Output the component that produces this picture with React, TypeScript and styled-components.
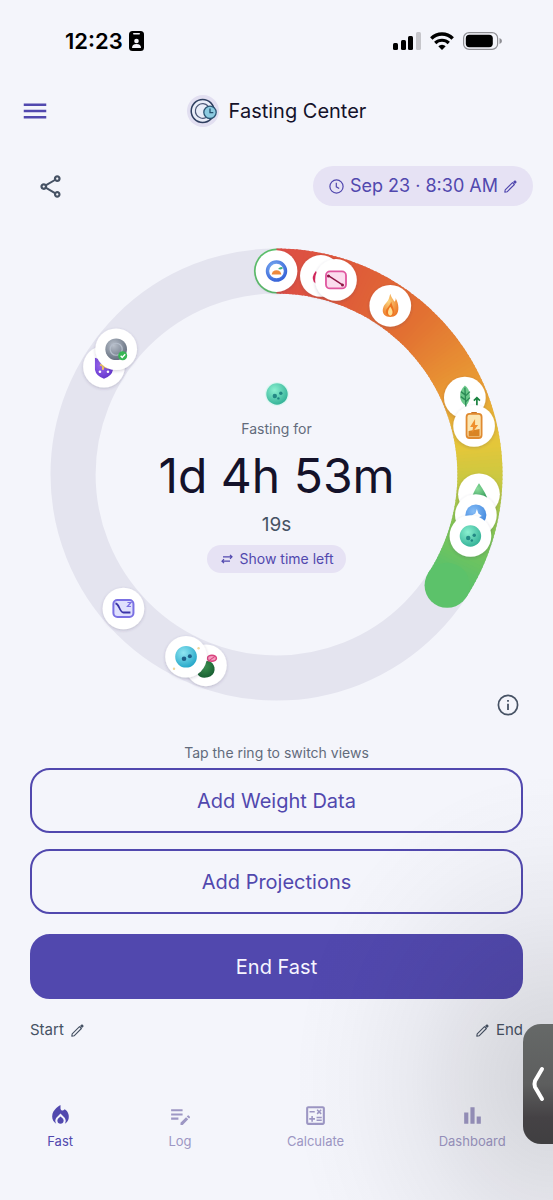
import React from "react";
import styled, { createGlobalStyle, css } from "styled-components";
import {
  MdBarChart,
  MdEditNote,
  MdLocalFireDepartment,
  MdMenu,
  MdOutlineCalculate,
  MdOutlineShare,
} from "react-icons/md";

const color = {
  page: "#f4f5fb",
  primary: "#5148ae",
  tint: "#e6e2f4",
  track: "#e4e4ef",
  ink: "#14122a",
  slate: "#465264",
  grey: "#626b7b",
  muted: "#9d97c4",
};

const GlobalStyle = createGlobalStyle`
  * { box-sizing: border-box; }
  body {
    margin: 0;
    background: ${color.page};
    font-family: Inter, "Liberation Sans", sans-serif;
    color: ${color.ink};
  }
  button {
    font: inherit;
    color: inherit;
    background: none;
    border: 0;
    padding: 0;
    cursor: pointer;
  }
  svg { display: block; flex-shrink: 0; }
`;

const Screen = styled.div`
  min-height: 100vh;
  display: flex;
  flex-direction: column;
  overflow: hidden;
`;

const StatusBar = styled.div`
  height: 82px;
  padding: 0 51px 0 65px;
  display: flex;
  align-items: center;
  justify-content: space-between;
  color: #000;
`;

const StatusGroup = styled.div<{ $gap: number }>`
  display: flex;
  align-items: center;
  gap: ${(p) => p.$gap}px;
`;

const StatusTime = styled.span`
  font-size: 22px;
  line-height: 26px;
  font-weight: 600;
`;

const Header = styled.header`
  height: 58px;
  padding: 0 20px;
  display: grid;
  grid-template-columns: 1fr auto 1fr;
  align-items: center;
`;

const IconButton = styled.button<{ $tone: string }>`
  display: flex;
  justify-self: start;
  color: ${(p) => p.$tone};
`;

const Brand = styled.div`
  display: flex;
  align-items: center;
  gap: 10px;
`;

const Title = styled.h1`
  margin: 0;
  font-size: 20px;
  line-height: 28px;
  font-weight: 400;
`;

const Toolbar = styled.div`
  padding: 26px 20px 0 37px;
  display: flex;
  align-items: center;
  justify-content: space-between;
`;

const Chip = styled.button<{ $size: "large" | "small" }>`
  && {
    display: flex;
    align-items: center;
    color: ${color.primary};
    background: ${color.tint};
    border-radius: 20px;
    ${(p) =>
      p.$size === "large"
        ? css`
            height: 40px;
            padding: 0 16px;
            gap: 6px;
            font-size: 18px;
            line-height: 24px;
          `
        : css`
            height: 28px;
            padding: 0 13px;
            gap: 6px;
            font-size: 14px;
            line-height: 18px;
          `}
  }
`;

const RingSection = styled.section`
  margin-top: 42px;
  display: grid;
`;

const RingBox = styled.div`
  grid-area: 1 / 1;
  width: calc(100% - 100px);
  max-width: 520px;
  margin: 0 auto 17px;
  display: grid;
`;

const RingSvg = styled.svg`
  grid-area: 1 / 1;
  width: 100%;
  height: auto;
  overflow: visible;
`;

const Readout = styled.div`
  grid-area: 1 / 1;
  place-self: center;
  padding-top: 6px;
  display: flex;
  flex-direction: column;
  align-items: center;
`;

const ReadoutLabel = styled.span`
  margin-top: 14px;
  font-size: 14px;
  line-height: 18px;
  color: ${color.grey};
`;

const Elapsed = styled.strong`
  margin-top: 8px;
  font-size: 48px;
  line-height: 60px;
  font-weight: 400;
  white-space: nowrap;
`;

const Seconds = styled.span`
  margin: 8px 0 9px;
  font-size: 19px;
  line-height: 22px;
  color: ${color.slate};
`;

const InfoButton = styled.button`
  && {
    grid-area: 1 / 1;
    place-self: end;
    margin-right: 34px;
    margin-bottom: 2px;
    color: ${color.slate};
  }
`;

const Hint = styled.p`
  margin: 26px 0 6px;
  text-align: center;
  font-size: 14px;
  line-height: 18px;
  color: ${color.grey};
`;

const Actions = styled.div`
  padding: 0 30px;
  display: flex;
  flex-direction: column;
  gap: 16px;
`;

const ActionButton = styled.button<{ $filled?: boolean }>`
  && {
    height: 65px;
    border: 2px solid ${color.primary};
    border-radius: 20px;
    font-size: 20px;
    line-height: 28px;
    color: ${(p) => (p.$filled ? "#f6f5ff" : color.primary)};
    background: ${(p) => (p.$filled ? color.primary : "transparent")};
    margin-top: ${(p) => (p.$filled ? 4 : 0)}px;
  }
`;

const RangeRow = styled.div`
  padding: 21px 30px 0;
  display: flex;
  justify-content: space-between;
`;

const RangeButton = styled.button`
  && {
    display: flex;
    align-items: center;
    gap: 7px;
    font-size: 15px;
    line-height: 20px;
    color: ${color.slate};
  }
`;

const Nav = styled.nav`
  padding: 63px 0 48px;
  display: flex;
  justify-content: space-around;
`;

const NavLink = styled.a<{ $active?: boolean }>`
  display: flex;
  flex-direction: column;
  align-items: center;
  gap: 4px;
  font-size: 13px;
  line-height: 18px;
  text-decoration: none;
  color: ${(p) => (p.$active ? color.primary : color.muted)};
`;

const EdgeShade = styled.div`
  position: fixed;
  right: 0;
  bottom: 0;
  width: 280px;
  height: 440px;
  pointer-events: none;
  background: radial-gradient(
    ellipse 260px 310px at 100% 73%,
    rgba(40, 40, 45, 0.16),
    rgba(40, 40, 45, 0.11) 28%,
    rgba(40, 40, 45, 0.05) 55%,
    rgba(40, 40, 45, 0.015) 80%,
    rgba(40, 40, 45, 0) 100%
  );
`;

const EdgeHandle = styled.button`
  && {
    position: fixed;
    right: 0;
    bottom: 56px;
    width: 30px;
    height: 120px;
    display: flex;
    align-items: center;
    justify-content: center;
    border-radius: 18px 0 0 18px;
    background: linear-gradient(#666968, #5d5e5e 50%, #454245 78%, #403f41);
  }
`;

const CENTER = 226;
const RADIUS = 203;
const SWEEP = 123;

function pointAt(angle: number) {
  const rad = ((angle - 90) * Math.PI) / 180;
  return { x: CENTER + RADIUS * Math.cos(rad), y: CENTER + RADIUS * Math.sin(rad) };
}

const stops: [number, number[]][] = [
  [0, [221, 78, 70]],
  [18, [222, 88, 58]],
  [42, [226, 112, 50]],
  [66, [233, 156, 52]],
  [82, [228, 199, 58]],
  [92, [200, 200, 66]],
  [106, [128, 196, 84]],
  [118, [96, 194, 104]],
  [124, [92, 194, 106]],
];

function ringColor(angle: number) {
  const i = Math.max(1, stops.findIndex(([a]) => a >= angle));
  const [a0, c0] = stops[i - 1];
  const [a1, c1] = stops[i];
  const t = (angle - a0) / (a1 - a0);
  return `rgb(${c0.map((c, k) => Math.round(c + (c1[k] - c) * t)).join(",")})`;
}

function arc(from: number, to: number) {
  const a = pointAt(from);
  const b = pointAt(to);
  return `M${a.x} ${a.y}A${RADIUS} ${RADIUS} 0 0 1 ${b.x} ${b.y}`;
}

const Ball = ({ fill }: { fill: string }) => (
  <g>
    <circle r="10.7" fill={`url(#${fill})`} />
    <g fill="#0d6f74" opacity="0.75">
      <circle cx="-2.2" cy="2" r="2.2" />
      <circle cx="3.8" cy="-0.8" r="1.7" />
      <circle cx="1.4" cy="4.4" r="1.2" />
    </g>
  </g>
);

const Sunrise = () => (
  <g>
    <circle r="9" fill="#fff" stroke="url(#blueRing)" strokeWidth="3.4" />
    <path d="M-4.800 3.500A4.800 4.300 0 0 1 4.800 3.500Z" fill="#ee8a3c" />
    <path d="M1.500-2q3-3.500 5-1q-1 2-5 1z" fill="#3fb183" />
  </g>
);

const Drop = () => <path d="M-5-5q-5 6-2 11q4 4 10 1z" fill="#d6285b" />;

const ChartDown = () => (
  <g>
    <rect x="-10" y="-8.500" width="20" height="17" rx="4" fill="#fbdcee" stroke="#e0569f" strokeWidth="1.800" />
    <path d="M-8-4.500 6.500 5" stroke="#8d1544" strokeWidth="1.400" />
    <circle cx="-7.500" cy="-4" r="1.500" fill="#8d1544" />
    <circle cx="6.500" cy="5" r="1.500" fill="#8d1544" />
  </g>
);

const Flame = () => (
  <g>
    <path d="M0-12C1-8 3-7 4-4C5-5 6-6 5-8C9-2 9 6 6 9C3 12-3 12-6 9C-9 5-7 0-4-3C-1-6-1-9 0-12Z" fill="url(#flame)" />
    <path d="M1-4C2 1 5 4 3 9C1 11-2 11-4 8C-6 3-1 2 1-4Z" fill="#ee7420" />
    <path d="M0 1C3 5 3 9 0 10C-3 9-3 5 0 1Z" fill="#ffe092" />
  </g>
);

const Leaf = () => (
  <g>
    <path d="M0-12C6-8 7 3 1 8C-6 5-7-6 0-12Z" fill="#6cc98b" />
    <path d="M0-10 1 9M0-3-4-6M0 2-4-1M1-2 5-6M1 4 5 0" stroke="#2a8a55" strokeWidth="1.300" fill="none" />
    <path d="M12 8V0M9 3l3-3 3 3" stroke="#19823f" strokeWidth="1.700" fill="none" />
  </g>
);

const Battery = () => (
  <g>
    <rect x="-3" y="-14" width="6" height="4" rx="1" fill="#c87424" />
    <rect x="-7.500" y="-12" width="15" height="24" rx="3" fill="#fbe6b2" stroke="#e08a30" strokeWidth="1.800" />
    <path d="M-5.500 5 5.500 3V10.500H-5.500Z" fill="#d98424" />
    <path d="M1-7-4 1H-1L-2 7 4-1H1Z" fill="#ef8f2d" />
  </g>
);

const Mountain = () => <path d="M0-11Q7-1 9 6H-8Q-6-2 0-11Z" fill="url(#green)" />;

const BlueSpark = () => (
  <g>
    <circle r="10.500" fill="url(#sky)" />
    <path d="M1-6 2.500-1.500 6 1 2.500 2.500 1 6-0.500 2.500-5 1-0.500-1.500Z" fill="#fff" />
  </g>
);

const Avocado = () => (
  <g>
    <path d="M-8 9C-9 2-2-7 4-4C11 0 10 10 2 12C-3 13-7 12-8 9Z" fill="url(#darkGreen)" />
    <ellipse cx="6" cy="-7" rx="4.500" ry="3" fill="#f59cc0" stroke="#d9457f" strokeWidth="1.500" />
    <path d="M2-4 9-9" stroke="#d9457f" />
  </g>
);

const BlueBall = () => (
  <g>
    <circle r="10.800" fill="url(#cyan)" />
    <circle cx="-2" cy="2" r="2.300" fill="#1d5f88" />
    <circle cx="3.800" cy="-0.500" r="2" fill="#1d5f88" />
    <circle cx="12.500" cy="-8.500" r="1.200" fill="#f0d69a" />
    <circle cx="-12" cy="12" r="1.200" fill="#f0d69a" />
  </g>
);

const SleepChart = () => (
  <g fill="none">
    <rect x="-10" y="-8.500" width="20" height="17" rx="4" fill="#dfe0fd" stroke="#7a70e3" strokeWidth="2" />
    <path d="M-8-5C-4-5-4 4 0 4H7" stroke="#3b35a8" strokeWidth="1.800" />
    <path d="M4-6H7.500L4-2H7.500" stroke="#7a70e3" strokeWidth="1.200" />
  </g>
);

const Shield = () => (
  <g>
    <path d="M-9-9Q0-5 9-9V3Q8 9 0 12Q-8 9-9 3Z" fill="url(#violet)" />
    <path d="M-1-4V3M-4-2 4 1" stroke="#f2c75c" strokeWidth="2" />
    <circle cx="-4" cy="5" r="1.300" fill="#fff" />
    <circle cx="4" cy="5" r="1.300" fill="#fff" />
  </g>
);

const Medal = () => (
  <g>
    <circle r="10.800" fill="url(#steel)" />
    <circle r="6" fill="none" stroke="#b4bdca" strokeWidth="1.200" />
    <circle cx="6.500" cy="6.500" r="4.500" fill="#37b654" />
    <path d="m4.500 6.500 1.500 1.600 3-3.200" stroke="#fff" strokeWidth="1.400" fill="none" />
  </g>
);

const milestones: { angle: number; name: string; icon: React.ReactNode }[] = [
  { angle: 0, name: "sunrise", icon: <Sunrise /> },
  { angle: 12.6, name: "drop", icon: <Drop /> },
  { angle: 17, name: "decline", icon: <ChartDown /> },
  { angle: 34, name: "flame", icon: <Flame /> },
  { angle: 67.8, name: "leaf", icon: <Leaf /> },
  { angle: 76.2, name: "battery", icon: <Battery /> },
  { angle: 95.6, name: "mountain", icon: <Mountain /> },
  { angle: 101.5, name: "spark", icon: <BlueSpark /> },
  { angle: 107.6, name: "cell", icon: <Ball fill="mint" /> },
  { angle: 200.3, name: "avocado", icon: <Avocado /> },
  { angle: 206.4, name: "renewal", icon: <BlueBall /> },
  { angle: 228.8, name: "sleep", icon: <SleepChart /> },
  { angle: 302, name: "shield", icon: <Shield /> },
  { angle: 308, name: "medal", icon: <Medal /> },
];

const gradients: [string, string, string][] = [
  ["mint", "#8af0d0", "#2fae94"],
  ["cyan", "#8fe6f2", "#1fa3c6"],
  ["steel", "#b9c0cb", "#5d6878"],
  ["blueRing", "#86b8f5", "#3864d8"],
  ["sky", "#86bdf6", "#3f86dd"],
  ["green", "#8bdc9b", "#2f9a56"],
  ["darkGreen", "#3d9650", "#155a30"],
  ["violet", "#a06cf2", "#5f32c9"],
  ["flame", "#fbd27c", "#ec7423"],
];

function Ring() {
  const start = pointAt(0);
  const end = pointAt(SWEEP);
  return (
    <RingSvg viewBox="0 0 452 452" role="img" aria-label="Fasting progress ring">
      <defs>
        {gradients.map(([id, from, to]) => (
          <radialGradient key={id} id={id} cx="0.38" cy="0.32" r="0.75">
            <stop offset="0" stopColor={from} />
            <stop offset="1" stopColor={to} />
          </radialGradient>
        ))}
        <filter id="lift" x="-30%" y="-30%" width="160%" height="160%">
          <feDropShadow dx="0" dy="1" stdDeviation="1.800" floodColor="#3b3560" floodOpacity="0.24" />
        </filter>
      </defs>
      <circle cx={CENTER} cy={CENTER} r={RADIUS} fill="none" stroke={color.track} strokeWidth="45" />
      <circle cx={start.x} cy={start.y} r="22.500" fill="#5cc26a" />
      {Array.from({ length: SWEEP }, (_, i) => (
        <path
          key={i}
          d={arc(i, Math.min(i + 1.4, SWEEP))}
          stroke={ringColor(i + 0.5)}
          strokeWidth="45"
          fill="none"
        />
      ))}
      <circle cx={end.x} cy={end.y} r="22.500" fill="#5cc26a" />
      {milestones.map(({ angle, name, icon }) => {
        const p = pointAt(angle);
        return (
          <g key={name} transform={`translate(${p.x} ${p.y})`}>
            <circle r="20.800" fill="#fff" filter="url(#lift)" />
            {icon}
          </g>
        );
      })}
    </RingSvg>
  );
}

const BadgeIcon = () => (
  <svg width="15" height="20" viewBox="0 0 15 20" aria-hidden="true">
    <rect width="15" height="20" rx="3.500" fill="#000" />
    <rect x="4" y="2" width="7" height="1.600" rx="0.800" fill={color.page} />
    <circle cx="7.500" cy="10" r="2.300" fill={color.page} />
    <path d="M3 17Q3 13 7.500 13Q12 13 12 17Z" fill={color.page} />
  </svg>
);

const SignalIcon = () => (
  <svg width="28" height="18" viewBox="0 0 28 18" aria-hidden="true">
    <rect y="11" width="5" height="7" rx="1.500" />
    <rect x="8" y="8" width="5" height="10" rx="1.500" />
    <rect x="15" y="4" width="5" height="14" rx="1.500" />
    <rect x="23" y="0" width="5" height="18" rx="1.500" fill="#c6c6cb" />
  </svg>
);

const WifiIcon = () => (
  <svg width="24" height="18" viewBox="0 0 24 18" fill="none" stroke="#000" strokeWidth="3.500" aria-hidden="true">
    <path d="M1.300 6.400A15.500 15.500 0 0 1 22.700 6.400" />
    <path d="M5.200 11A9.800 9.800 0 0 1 18.800 11" strokeWidth="3.200" />
    <path d="M12 18 8.300 14.300A5.300 5.300 0 0 1 15.700 14.300Z" fill="#000" stroke="none" />
  </svg>
);

const BatteryIcon = () => (
  <svg width="39" height="18" viewBox="0 0 39 18" aria-hidden="true">
    <rect x="0.600" y="0.600" width="34" height="16.800" rx="5.500" fill="none" stroke="#8e8e93" strokeWidth="1.200" />
    <rect x="2.800" y="2.800" width="27" height="12.400" rx="3.600" />
    <path d="M36.500 6V12Q39 11 39 9T36.500 6Z" fill="#8e8e93" />
  </svg>
);

const Logo = () => (
  <svg width="32" height="32" viewBox="0 0 32 32" fill="none" aria-hidden="true">
    <circle cx="16" cy="16" r="16" fill="#e2dff1" />
    <circle cx="15.700" cy="16" r="11.500" fill="#e9edf8" stroke="#2f3f60" strokeWidth="1.500" />
    <path d="M21 11A7.300 7.300 0 1 0 19 22.500" stroke="#4d5878" strokeWidth="1.200" />
    <circle cx="23" cy="17.300" r="6.200" fill="#8ccbe0" stroke="#2b5573" strokeWidth="1.300" />
    <path d="M23 13.500V17.700H26.300" stroke="#24506e" strokeWidth="1.300" />
  </svg>
);

const SwapIcon = () => (
  <svg width="14" height="14" viewBox="0 0 14 14" aria-hidden="true">
    <g fill="none" stroke="currentColor" strokeWidth="1.200">
      <path d="M3 4.800H11.500M10 2.800 12 4.800 10 6.800" />
      <path d="M10 9.200H2M4 7.200 2 9.200 4 11.200" />
    </g>
  </svg>
);

const ClockIcon = () => (
  <svg width="15" height="15" viewBox="0 0 15 15" fill="none" stroke="currentColor" strokeWidth="1.200" aria-hidden="true">
    <circle cx="7.500" cy="7.500" r="6.600" />
    <path d="M7.300 3.800V7.800L10.200 9.600" />
  </svg>
);

const PencilIcon = () => (
  <svg width="13" height="13" viewBox="0 0 13 13" aria-hidden="true">
    <path
      d="M0.800 12.200 1.200 9.900 8.500 2.600 10.400 4.500 3.100 11.800Z"
      fill="none"
      stroke="currentColor"
      strokeWidth="1.100"
      strokeLinejoin="round"
    />
    <path d="M9 2 10.500 0.600Q11 0.200 11.500 0.600L12.400 1.500Q12.800 2 12.400 2.500L11 4Z" fill="currentColor" />
  </svg>
);

const InfoIcon = () => (
  <svg width="22" height="22" viewBox="0 0 22 22" aria-hidden="true">
    <circle cx="11" cy="11" r="9.600" fill="none" stroke="currentColor" strokeWidth="1.700" />
    <path d="M10.100 9.700H11.900V16H10.100ZM10.100 6H11.900V7.800H10.100Z" fill="currentColor" />
  </svg>
);

const tabs = [
  { label: "Fast", Icon: MdLocalFireDepartment },
  { label: "Log", Icon: MdEditNote },
  { label: "Calculate", Icon: MdOutlineCalculate },
  { label: "Dashboard", Icon: MdBarChart },
];

export default function App() {
  return (
    <Screen>
      <GlobalStyle />
      <StatusBar>
        <StatusGroup $gap={6}>
          <StatusTime>12:23</StatusTime>
          <BadgeIcon />
        </StatusGroup>
        <StatusGroup $gap={9}>
          <SignalIcon />
          <WifiIcon />
          <BatteryIcon />
        </StatusGroup>
      </StatusBar>

      <Header>
        <IconButton $tone={color.primary} aria-label="Menu">
          <MdMenu size={30} />
        </IconButton>
        <Brand>
          <Logo />
          <Title>Fasting Center</Title>
        </Brand>
      </Header>

      <main>
        <Toolbar>
          <IconButton $tone={color.slate} aria-label="Share">
            <MdOutlineShare size={27} />
          </IconButton>
          <Chip $size="large">
            <ClockIcon />
            Sep 23 · 8:30 AM
            <PencilIcon />
          </Chip>
        </Toolbar>

        <RingSection>
          <RingBox>
            <Ring />
            <Readout>
              <svg width="24" height="24" viewBox="-12 -12 24 24" aria-hidden="true">
                <circle r="12" fill="#dff6f2" />
                <Ball fill="mint" />
              </svg>
              <ReadoutLabel>Fasting for</ReadoutLabel>
              <Elapsed>1d 4h 53m</Elapsed>
              <Seconds>19s</Seconds>
              <Chip $size="small">
                <SwapIcon />
                Show time left
              </Chip>
            </Readout>
          </RingBox>
          <InfoButton aria-label="Info">
            <InfoIcon />
          </InfoButton>
        </RingSection>

        <Hint>Tap the ring to switch views</Hint>

        <Actions>
          <ActionButton>Add Weight Data</ActionButton>
          <ActionButton>Add Projections</ActionButton>
          <ActionButton $filled>End Fast</ActionButton>
        </Actions>

        <RangeRow>
          <RangeButton>
            Start
            <PencilIcon />
          </RangeButton>
          <RangeButton>
            <PencilIcon />
            End
          </RangeButton>
        </RangeRow>
      </main>

      <Nav>
        {tabs.map(({ label, Icon }, i) => (
          <NavLink key={label} href={`#${label.toLowerCase()}`} $active={i === 0}>
            <Icon size={25} />
            {label}
          </NavLink>
        ))}
      </Nav>

      <EdgeShade />
      <EdgeHandle aria-label="Open side panel">
        <svg width="14" height="36" viewBox="0 0 14 36" fill="none" stroke="#fff" strokeWidth="4" strokeLinecap="round" strokeLinejoin="round" aria-hidden="true">
          <path d="M11 3 4 15Q3 18 4 21L11 33" />
        </svg>
      </EdgeHandle>
    </Screen>
  );
}
